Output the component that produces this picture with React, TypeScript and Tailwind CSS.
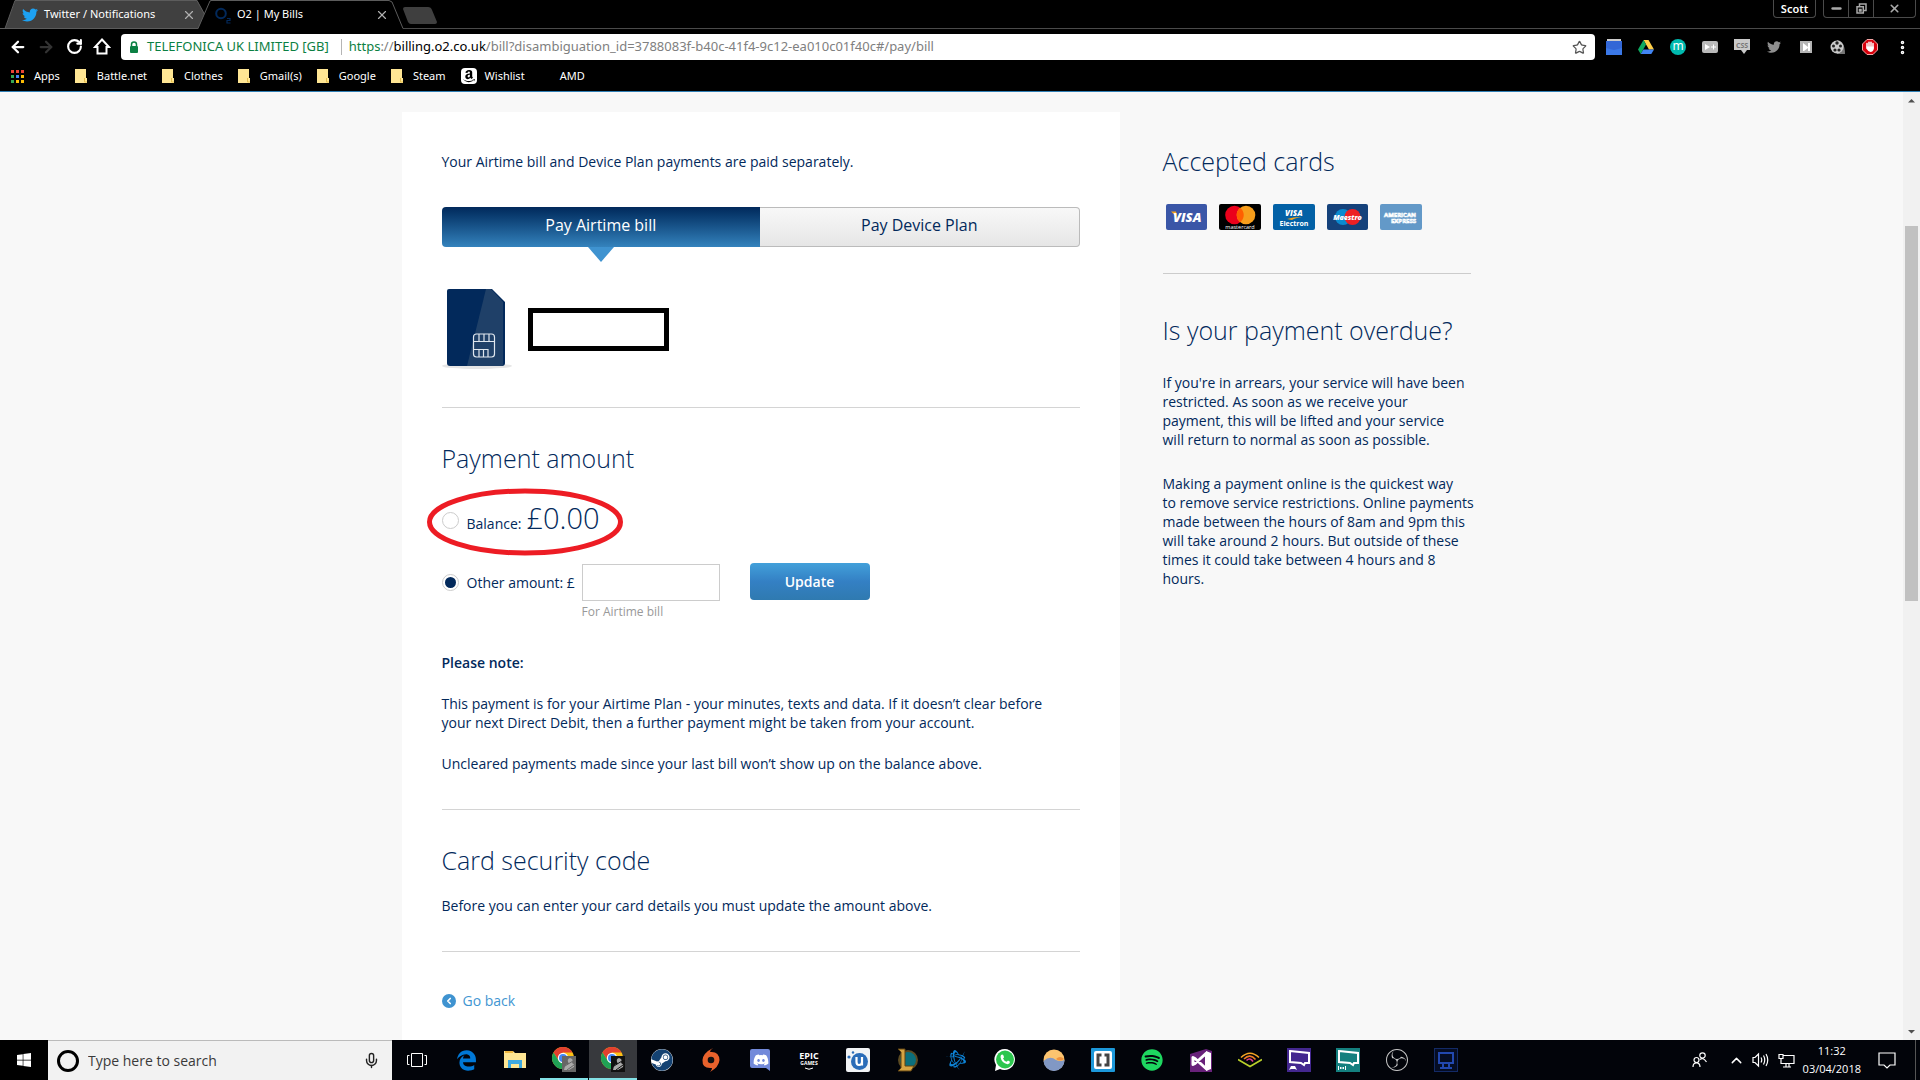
import React, { useState } from 'react';
import { ArrowLeft, ArrowRight, ChevronLeft, ChevronUp, Mic, Minus, MoreVertical, RotateCw, Star, X } from 'lucide-react';
import { FaAmazon, FaBattleNet, FaDiscord, FaEdgeLegacy, FaSpotify, FaSteam, FaTwitter, FaWindows } from 'react-icons/fa6';
import { SiObsstudio } from 'react-icons/si';

const bookmarks = ['Battle.net', 'Clothes', 'Gmail(s)', 'Google', 'Steam'];

const appDots = ['#ea4335', '#ea4335', '#ea4335', '#34a853', '#4285f4', '#fbbc05', '#34a853', '#fbbc05', '#fbbc05'];

function TabStrip() {
  return (
    <div className="flex h-[29px] text-white text-[11px]">
      <div className="relative w-[198px] h-[29px]">
        <svg className="absolute inset-0 overflow-visible" width="198" height="29">
          <path d="M5 28.5L15 1L16 0H197L205 15L198 28.5Z" fill="#404040" />
          <path d="M0 28.5H5L15 .5H197L205 15L198 28.5H5" fill="none" stroke="#5c5c5c" />
        </svg>
        <div className="relative flex items-center h-[29px] pl-[22px] pr-[2px]">
          <FaTwitter className="w-4 h-4 text-[#1da1f2]" />
          <span className="ml-[6px] flex-1 whitespace-nowrap">Twitter / Notifications</span>
          <button aria-label="Close tab" className="text-[#b0b0b0]">
            <X size={14} />
          </button>
        </div>
      </div>
      <div className="relative w-[205px] h-[29px]">
        <svg className="absolute inset-0 overflow-visible" width="205" height="29">
          <path d="M0 28.5L12 1L13 .5H191L194 2L205 28.5" fill="#000" stroke="#5c5c5c" />
          <path d="M1 28.5H204" stroke="#000" />
        </svg>
        <div className="relative flex items-center h-[29px] pl-4 pr-[14px]">
          <svg width="18" height="18" viewBox="0 0 18 18" fill="none" stroke="#02295b">
            <circle cx="7" cy="7.5" r="4.8" strokeWidth="2" />
            <path d="M13 12.5h3v2h-3v2.5h3.5" strokeWidth="1.2" />
          </svg>
          <span className="ml-[5px] flex-1 whitespace-nowrap">O2 | My Bills</span>
          <button aria-label="Close tab" className="text-[#b0b0b0]">
            <X size={14} />
          </button>
        </div>
      </div>
      <div className="flex-1 border-b border-[#4a4a4a] pt-[7px]">
        <button aria-label="New tab" className="block">
          <svg width="34" height="17">
            <path d="M2 0H25Q28 0 29 3L34 15Q34 17 32 17H8Q6 17 5 15L0 2Q0 0 2 0Z" fill="#3f3f3f" />
          </svg>
        </button>
      </div>
      <div className="flex items-start gap-[7px] pr-1 border-b border-[#4a4a4a]">
        <button className="w-[43px] h-[18px] border border-t-0 border-[#4a4a4a] rounded-b leading-[17px] font-semibold">
          Scott
        </button>
        <div className="flex h-[18px] border border-t-0 border-[#4a4a4a] rounded-b text-[#a9a9a9] divide-x divide-[#4a4a4a]">
          <button aria-label="Minimise" className="w-[25px] flex items-center justify-center">
            <Minus size={13} strokeWidth={5} />
          </button>
          <button aria-label="Restore" className="w-[25px] flex items-center justify-center">
            <svg width="11" height="11" fill="none" stroke="currentColor" strokeWidth="1.5">
              <path d="M3.5 3V1H10V7.5H8" />
              <path d="M1 3.7H7.3V10H1Z" />
              <path d="M3.5 6.5H5V8H3.5Z" />
            </svg>
          </button>
          <button aria-label="Close" className="w-[41px] flex items-center justify-center">
            <X size={13} strokeWidth={3} />
          </button>
        </div>
      </div>
    </div>
  );
}

function Extensions() {
  return (
    <div className="flex items-center pl-[3px] pr-[2px]">
      {[
        <svg key="cal" width="16" height="16">
          <path d="M0 2H16V16H0Z" fill="#3b78e7" />
          <path d="M0 2H16V9L8 11L0 9Z" fill="#3367d6" />
          <path d="M1 1H15" stroke="#ccc" strokeWidth="2" />
        </svg>,
        <svg key="drive" width="16" height="16" viewBox="0 0 16 16">
          <path d="M5.5 1H10.5L16 10.5H11Z" fill="#ffcf48" />
          <path d="M5.5 1L8 5.5L2.7 15L0 10.5Z" fill="#0da960" />
          <path d="M5.3 10.5H16L13.3 15H2.7Z" fill="#4285f4" />
        </svg>,
        <span key="m" className="w-4 h-4 rounded-full bg-[#00b9ae] text-white text-[12px] leading-[14px] text-center">m</span>,
        <svg key="play" width="16" height="12">
          <rect width="16" height="12" rx="2" fill="#b9b9b9" />
          <path d="M3 3L8 6L3 9Z" fill="#fff" />
          <path d="M9 6H14M11.5 3.5V8.5" stroke="#fff" />
        </svg>,
        <svg key="css" width="16" height="16">
          <path d="M0 0H16V11H13L10 15L7 11H0Z" fill="#c9c9c9" />
          <text x="8" y="8.5" fontSize="7" fontWeight="700" fill="#777" textAnchor="middle">CSS</text>
        </svg>,
        <FaTwitter key="tw" className="w-[14px] h-[14px] text-[#8f8f8f]" />,
        <svg key="k" width="12" height="12">
          <rect width="12" height="12" fill="#b5b5b5" />
          <path d="M3 2L8 6V2H10V10H8V7L4 10H3Z" fill="#fff" />
        </svg>,
        <svg key="reel" width="16" height="16">
          <path d="M7 1Q15 2 15 15L7 15Z" fill="#777" />
          <circle cx="7" cy="8" r="6.5" fill="#ccc" />
          <g fill="#222">
            <circle cx="7" cy="4" r="1.7" />
            <circle cx="3.5" cy="7" r="1.5" />
            <circle cx="10.5" cy="7" r="1.5" />
            <circle cx="5" cy="11" r="1.6" />
            <circle cx="9" cy="11" r="1.6" />
          </g>
        </svg>,
        <svg key="adb" width="16" height="16">
          <path d="M5 .5H11L15.5 5V11L11 15.5H5L.5 11V5Z" fill="#d8000c" stroke="#f3a3a3" />
          <path d="M5 8V4.5M7 8V3.2M9 8V3.2M11 9V4.5" stroke="#fff" strokeWidth="1.5" strokeLinecap="round" />
          <path d="M4.3 7.5H11.8V10Q11 13 8.5 13Q6.5 13 4.3 9.5Z" fill="#fff" />
        </svg>,
      ].map((icon, i) => (
        <button key={i} aria-label={`Extension ${i + 1}`} className="w-8 h-[26px] flex items-center justify-center">
          {icon}
        </button>
      ))}
      <button aria-label="Menu" className="w-8 flex justify-center text-white">
        <MoreVertical size={17} strokeWidth={3} />
      </button>
    </div>
  );
}

function Toolbar() {
  return (
    <div className="flex items-center h-9 text-white">
      <div className="flex pl-1">
        <button aria-label="Back" className="w-7 flex justify-center">
          <ArrowLeft size={18} strokeWidth={3} />
        </button>
        <button aria-label="Forward" className="w-7 flex justify-center text-[#333]">
          <ArrowRight size={18} strokeWidth={3} />
        </button>
        <button aria-label="Reload" className="w-7 flex justify-center">
          <RotateCw size={17} strokeWidth={3} />
        </button>
        <button aria-label="Home" className="w-7 flex justify-center">
          <svg width="18" height="17" fill="none" stroke="currentColor" strokeWidth="2">
            <path d="M9 1.5L16 9H13.5V15.5H4.5V9H2Z" />
          </svg>
        </button>
      </div>
      <div className="flex-1 flex items-center h-[26px] ml-[5px] px-2 bg-white rounded-sm text-[13px] text-[#0b8043] whitespace-nowrap">
        <svg width="10" height="12">
          <path d="M2.5 5V3.5Q2.5 1 5 1Q7.5 1 7.5 3.5V5" fill="none" stroke="#0b8043" strokeWidth="1.5" />
          <rect x="1" y="5" width="8" height="7" rx="1" fill="#0b8043" />
        </svg>
        <span className="ml-2">TELEFONICA UK LIMITED [GB]</span>
        <span className="w-px h-4 ml-3 mr-[7px] bg-[#b5b5b5]" />
        <span className="flex-1 text-[#808080]">
          <span className="text-[#0b8043]">https</span>://<span className="text-black">billing.o2.co.uk</span>
          /bill?disambiguation_id=3788083f-b40c-41f4-9c12-ea010c01f40c#/pay/bill
        </span>
        <button aria-label="Bookmark this page" className="text-[#555]">
          <Star size={15} />
        </button>
      </div>
      <Extensions />
    </div>
  );
}

function BookmarksBar() {
  return (
    <nav className="flex items-center h-[26px] pl-[11px] pb-1 gap-[15px] text-[11px] text-white whitespace-nowrap">
      <a href="#apps" className="flex items-center gap-[10px]">
        <span className="grid grid-cols-3 gap-[2px]">
          {appDots.map((color, i) => (
            <span key={i} className="w-[3px] h-[3px]" style={{ backgroundColor: color }} />
          ))}
        </span>
        Apps
      </a>
      {bookmarks.map((name) => (
        <a key={name} href="#folder" className="flex items-center gap-[10px]">
          <svg width="12" height="14">
            <path d="M0 0H11V9H12V14H0Z" fill="#ffe694" />
            <path d="M9.5 9V13H12" fill="none" stroke="#e5bd4b" />
          </svg>
          {name}
        </a>
      ))}
      <a href="#wishlist" className="flex items-center gap-2">
        <span className="w-4 h-4 rounded-sm bg-white flex items-center justify-center">
          <FaAmazon className="w-[14px] h-[14px] text-black" />
        </span>
        Wishlist
      </a>
      <a href="#amd" className="pl-5">AMD</a>
    </nav>
  );
}

function SimCard() {
  return (
    <svg width="70" height="82" viewBox="0 0 70 82">
      <ellipse cx="35" cy="78" rx="35" ry="3" fill="#e6e6e6" />
      <path d="M7 1H50L63 14V75Q63 78 60 78H8Q5 78 5 75V3Q5 1 7 1Z" fill="#02295b" />
      <path d="M44 1H49L61 14V78H25Z" fill="#1f4068" />
      <g fill="none" stroke="#dfe6ee" strokeWidth="1.2">
        <rect x="31.5" y="46" width="21" height="23" rx="3" />
        <path d="M32 53.5H52M32 61.5H46V69M37 46V53M42 46V53M47 46V53M37 62V69M41.5 62V69" />
      </g>
    </svg>
  );
}

function PaymentCards() {
  return (
    <div className="flex gap-3 pl-[3px] mt-[27px]">
      <svg width="41" height="26" viewBox="0 0 41 26">
        <rect width="41" height="26" rx="2" fill="#3a56a7" />
        <path d="M5 7.5H10L11.5 14Z" fill="#f4a51c" />
        <text x="7" y="17.5" fontSize="13" fontWeight="800" fontStyle="italic" fill="#fff">VISA</text>
      </svg>
      <svg width="42" height="26" viewBox="0 0 42 26">
        <rect width="42" height="26" rx="2" fill="#000" />
        <circle cx="15.5" cy="11" r="9.3" fill="#eb001b" />
        <circle cx="27" cy="11" r="9.3" fill="#f79e1b" />
        <path d="M21.2 3.7A9.3 9.3 0 0 1 21.2 18.3A9.3 9.3 0 0 1 21.2 3.7Z" fill="#ff5f00" />
        <text x="21" y="24.5" fontSize="5.5" textAnchor="middle" fill="#fff">mastercard</text>
      </svg>
      <svg width="42" height="26" viewBox="0 0 42 26">
        <rect width="42" height="26" rx="2" fill="#0361a6" />
        <text x="12" y="11.5" fontSize="8" fontWeight="800" fontStyle="italic" fill="#fff">VISA</text>
        <path d="M14 15Q22 12.5 29 13Q22 14 19 16Z" fill="#f4a51c" />
        <text x="21" y="22" fontSize="7" fontWeight="700" textAnchor="middle" fill="#fff">Electron</text>
      </svg>
      <svg width="41" height="26" viewBox="0 0 41 26">
        <rect width="41" height="26" rx="2" fill="#15427b" />
        <circle cx="16" cy="13" r="8" fill="#0a8bd0" />
        <circle cx="25.5" cy="13" r="8" fill="#ed2024" />
        <text x="20.5" y="15.5" fontSize="7" fontWeight="800" fontStyle="italic" textAnchor="middle" fill="#fff">Maestro</text>
      </svg>
      <svg width="42" height="26" viewBox="0 0 42 26">
        <rect width="42" height="26" rx="2" fill="#6399c8" />
        <g fontSize="6" fontWeight="700" fill="#6399c8" stroke="#fff" strokeWidth=".7">
          <text x="4" y="12.5">AMERICAN</text>
          <text x="11" y="18.8">EXPRESS</text>
        </g>
      </svg>
    </div>
  );
}

function PaymentForm() {
  const [choice, setChoice] = useState('other');
  const radio =
    'appearance-none w-[17px] h-[17px] rounded-full border border-[#ccc] bg-white bg-clip-content p-[2px] checked:bg-[#02295b]';

  return (
    <form onSubmit={(e) => e.preventDefault()}>
      <div className="relative flex items-baseline h-[63px] mt-[14px] pt-3">
        <input
          id="balance"
          type="radio"
          name="amount"
          className={`${radio} -mb-1.5`}
          checked={choice === 'balance'}
          onChange={() => setChoice('balance')}
        />
        <label htmlFor="balance" className="ml-2 flex items-baseline gap-[5px]">
          Balance: <span className="text-[29px] leading-[36px] font-light">£0.00</span>
        </label>
        <svg className="absolute -left-[15px] top-0 pointer-events-none" width="197" height="68">
          <ellipse cx="98" cy="34" rx="95.5" ry="31" fill="none" stroke="#ed1c24" strokeWidth="5" />
        </svg>
      </div>
      <div className="flex items-start mt-3">
        <div className="flex items-center h-[38px] w-[140px]">
          <input
            id="other"
            type="radio"
            name="amount"
            className={radio}
            checked={choice === 'other'}
            onChange={() => setChoice('other')}
          />
          <label htmlFor="other" className="ml-2 whitespace-nowrap">Other amount: £</label>
        </div>
        <div>
          <input aria-label="Other amount" type="text" className="block w-[138px] h-[37px] mt-[1px] px-2 border border-[#ccc] bg-white" />
          <p className="pt-px text-[12px] leading-5 text-[#999]">For Airtime bill</p>
        </div>
        <button className="ml-[30px] w-[120px] h-[37px] rounded bg-linear-to-b from-[#42a0da] via-[#3480c4] to-[#2f7ab0] text-white font-semibold">
          Update
        </button>
      </div>
    </form>
  );
}

function MainPanel() {
  return (
    <main className="w-[718px] px-10 pt-10 bg-white">
      <p>Your Airtime bill and Device Plan payments are paid separately.</p>
      <div className="flex mt-[36px] h-10 text-[16px]">
        <button className="relative flex-1 pb-1 rounded-l bg-linear-to-b from-[#02295b] to-[#3483bd] text-white font-medium">
          Pay Airtime bill
          <svg className="absolute left-1/2 top-full -translate-x-1/2" width="26" height="15">
            <path d="M0 0H26L13 15Z" fill="#3f93d0" />
          </svg>
        </button>
        <button className="flex-1 pb-1 rounded-r border border-l-0 border-[#bbb] bg-linear-to-b from-[#f8f8f8] to-[#e6e6e6]">
          Pay Device Plan
        </button>
      </div>
      <div className="flex items-center gap-4 mt-[41px] pb-[37px] border-b border-[#d4d4d4]">
        <SimCard />
        <div className="w-[141px] h-[43px] border-[5px] border-black" />
      </div>
      <h2 className="mt-[34px] text-[25px] leading-8 font-light">Payment amount</h2>
      <PaymentForm />
      <div className="pb-[36px] border-b border-[#d4d4d4]">
        <p className="mt-[31px] font-semibold">Please note:</p>
        <p className="mt-[22px] pr-5">
          This payment is for your Airtime Plan - your minutes, texts and data. If it doesn’t clear before your next
          Direct Debit, then a further payment might be taken from your account.
        </p>
        <p className="mt-[22px]">Uncleared payments made since your last bill won’t show up on the balance above.</p>
      </div>
      <div className="pb-[36px] border-b border-[#d4d4d4]">
        <h2 className="mt-[34px] text-[25px] leading-8 font-light">Card security code</h2>
        <p className="mt-[20px]">Before you can enter your card details you must update the amount above.</p>
      </div>
      <a href="#back" className="flex items-center gap-[7px] mt-[39px] text-[#3f96d2]">
        <span className="w-[14px] h-[14px] rounded-full bg-[#3f93d0] flex items-center justify-center">
          <ChevronLeft size={10} strokeWidth={4} className="text-white" />
        </span>
        Go back
      </a>
    </main>
  );
}

function Sidebar() {
  return (
    <aside className="w-[308px] pt-[33px]">
      <div className="pb-[43px] border-b border-[#ccc]">
        <h2 className="text-[25px] leading-8 font-light">Accepted cards</h2>
        <PaymentCards />
      </div>
      <h2 className="mt-[40px] text-[25px] leading-8 font-light">Is your payment overdue?</h2>
      <p className="mt-[27px] pr-1">
        If you're in arrears, your service will have been restricted. As soon as we receive your payment, this will be
        lifted and your service will return to normal as soon as possible.
      </p>
      <p className="mt-[25px] whitespace-nowrap">
        Making a payment online is the quickest way
        <br />
        to remove service restrictions. Online payments
        <br />
        made between the hours of 8am and 9pm this
        <br />
        will take around 2 hours. But outside of these
        <br />
        times it could take between 4 hours and 8
        <br />
        hours.
      </p>
    </aside>
  );
}

function Scrollbar() {
  return (
    <div className="w-[17px] bg-[#f1f1f1] flex flex-col items-center justify-between">
      <div className="flex flex-col items-center w-full">
        <svg width="17" height="17">
          <path d="M5 10.5H12L8.5 7Z" fill="#505050" />
        </svg>
        <div className="mt-[117px] w-[13px] h-[375px] bg-[#c1c1c1]" />
      </div>
      <svg width="17" height="17">
        <path d="M5 7H12L8.5 10.5Z" fill="#505050" />
      </svg>
    </div>
  );
}

function ChromeIcon({ shade }: { shade: string }) {
  return (
    <svg width="26" height="26" viewBox="0 0 26 26">
      <circle cx="12" cy="12" r="11" fill="#fbc116" />
      <path d="M2.47 6.5A11 11 0 0 1 21.53 6.5H12L7.67 14.5Z" fill="#e2402f" />
      <path d="M2.47 6.5A11 11 0 0 0 12 23L16.33 14.5H7.67Z" fill="#1fa255" />
      <circle cx="12" cy="12" r="5.2" fill="#fff" />
      <circle cx="12" cy="12" r="4" fill="#4285f4" />
      <rect x="11" y="10" width="14" height="16" fill={shade} />
      <path d="M13 24Q14 17 18 18Q15 13 19 12Q23 13 21 17Q24 18 23 21L18 24Z" fill="#aaa" />
      <path d="M14 20L22 15M16 24L23 19" stroke={shade} />
    </svg>
  );
}

const taskbarApps = [
  {
    name: 'Task View',
    icon: (
      <svg width="20" height="16" fill="none" stroke="#fff">
        <path d="M4.5 1.5H15.5V14.5H4.5ZM2.5 3.5H.5V12.5H2.5M17.5 3.5H19.5V12.5H17.5" />
      </svg>
    ),
  },
  { name: 'Edge', icon: <FaEdgeLegacy className="w-[21px] h-[21px] text-[#0078d7]" /> },
  {
    name: 'File Explorer',
    icon: (
      <svg width="22" height="20">
        <path d="M0 1H9L11 3H22V18H0Z" fill="#ffe694" />
        <path d="M1 2H9" stroke="#f0b73f" strokeWidth="2" />
        <path d="M4 18V10H18V18H15V14H7V18Z" fill="#3fa9e0" />
      </svg>
    ),
  },
  { name: 'Chrome', icon: <ChromeIcon shade="#666" />, running: true },
  { name: 'Chrome profile', icon: <ChromeIcon shade="#111" />, running: true, active: true },
  {
    name: 'Steam',
    icon: (
      <span className="w-[22px] h-[22px] rounded-full bg-white">
        <FaSteam className="w-[22px] h-[22px] text-[#144272]" />
      </span>
    ),
  },
  {
    name: 'Origin',
    icon: (
      <svg width="20" height="26" viewBox="0 0 20 26">
        <path d="M12 1Q9 3 9 5Q18 4 18.5 13Q18 20 9 25Q11 23 11 21Q1 22 1.5 13Q2 6 12 1Z" fill="#e8622c" />
        <circle cx="10" cy="13" r="3.3" fill="#111" />
      </svg>
    ),
  },
  {
    name: 'Discord',
    icon: (
      <svg width="20" height="22">
        <path d="M2 0H18Q20 0 20 2V22L16 19H2Q0 19 0 17V2Q0 0 2 0Z" fill="#7289da" />
        <FaDiscord x="3" y="3" width="14" height="13" color="#fff" />
      </svg>
    ),
  },
  {
    name: 'Epic Games',
    icon: (
      <svg width="20" height="24">
        <text x="10" y="11" fontSize="9" fontWeight="700" fill="#fff" textAnchor="middle">EPIC</text>
        <text x="10" y="17" fontSize="5" fontWeight="700" fill="#fff" textAnchor="middle">GAMES</text>
        <path d="M6 20Q10 22.5 14 20" stroke="#fff" fill="none" />
      </svg>
    ),
  },
  {
    name: 'Uplay',
    icon: (
      <svg width="24" height="24">
        <rect width="24" height="24" rx="2" fill="#f1f3f5" />
        <circle cx="13.5" cy="13.5" r="8.5" fill="#2a6cb8" />
        <circle cx="3" cy="9" r="1.6" fill="#2a6cb8" />
        <circle cx="7" cy="4.5" r="1.2" fill="#2a6cb8" />
        <path d="M10.5 9V14Q10.5 17 13 17Q16 17 16 14V9V17.5" fill="none" stroke="#fff" strokeWidth="2.2" />
      </svg>
    ),
  },
  {
    name: 'League of Legends',
    icon: (
      <svg width="22" height="24">
        <circle cx="12" cy="12" r="9" fill="#0b6f7c" stroke="#5b4a22" strokeWidth="2" />
        <path d="M2 1H9V18H18L15 23H2L5 20V4Z" fill="#d6a443" stroke="#5e4312" />
      </svg>
    ),
  },
  { name: 'Battle.net', icon: <FaBattleNet className="w-5 h-5 text-[#0d84d8]" /> },
  {
    name: 'WhatsApp',
    icon: (
      <svg width="22" height="24" viewBox="0 0 22 24">
        <path d="M11 1A10.5 10.5 0 1 1 6 21L1 23L2 17A10.5 10.5 0 0 1 11 1Z" fill="#fff" />
        <circle cx="11" cy="11.5" r="9" fill="#2cc64e" />
        <path d="M7 7Q9 5.5 9.7 8L10 9.5L9 10.5Q10 13 12.7 13.7L14 12.5L16 13.7Q16 16 13.5 16.2Q7.5 15 6.5 9Z" fill="#fff" />
      </svg>
    ),
  },
  {
    name: 'f.lux',
    icon: (
      <svg width="22" height="22">
        <circle cx="11" cy="11" r="10.5" fill="#fcc46f" />
        <path d="M.5 12Q7 6 13 11Q17 13 21.5 11A10.5 10.5 0 0 1 .5 12Z" fill="#8198c4" />
        <path d="M13 10Q17 6 21 10Q17 13 13 10Z" fill="#f0923c" />
      </svg>
    ),
  },
  {
    name: 'Brackets',
    icon: (
      <svg width="24" height="24">
        <rect width="24" height="24" rx="1" fill="#1c98da" />
        <rect x="3" y="3" width="18" height="18" rx="2" fill="#fff" />
        <path d="M10.5 7H7V17H10.5M13.5 7H17V17H13.5" fill="none" stroke="#444" strokeWidth="3" />
      </svg>
    ),
  },
  { name: 'Spotify', icon: <FaSpotify className="w-[22px] h-[22px] text-[#1ed760]" /> },
  {
    name: 'Visual Studio',
    icon: (
      <svg width="22" height="23">
        <path d="M0 5L16 0L22 2V23H0Z" fill="#68217a" />
        <path d="M3 8.5V15.5L5 14.5L16.5 4V20L5 9.5Z" fill="none" stroke="#fff" strokeWidth="3" strokeLinejoin="round" />
        <path d="M16 2L21 4V20L16 22Z" fill="#fff" />
      </svg>
    ),
  },
  {
    name: 'Audible',
    icon: (
      <svg width="24" height="16" fill="none" strokeWidth="1.6">
        <path d="M0 7.5L12 14.5L24 7.5" stroke="#b9cf2a" />
        <path d="M3 5.5Q12 -3 21 5.5" stroke="#f5a623" />
        <path d="M6 7Q12 1 17.5 7.5" stroke="#f07a24" />
        <path d="M8.5 8.5Q12 5 15 9.5" stroke="#d93a8a" />
      </svg>
    ),
  },
  {
    name: 'Game capture',
    icon: (
      <svg width="24" height="24">
        <rect width="24" height="24" fill="#43278f" />
        <path d="M3 3L22 5V15H18L17 17L14 15L3 14Z" fill="none" stroke="#fff" strokeWidth="2" />
        <path d="M2 22L4 18H8L10 22L8 21H4Z" fill="#fff" />
      </svg>
    ),
  },
  {
    name: 'Live capture',
    icon: (
      <svg width="24" height="24">
        <rect width="24" height="24" fill="#14807f" />
        <path d="M3 3L22 5V15H18L17 17L14 15L3 14Z" fill="none" stroke="#fff" strokeWidth="2" />
        <path d="M2.5 18V22M9.5 18V22M4.5 19V21M7.5 19V21M6 19V21" stroke="#fff" />
      </svg>
    ),
  },
  { name: 'OBS', icon: <SiObsstudio className="w-[22px] h-[22px] text-[#c8c8c8]" /> },
  {
    name: 'Remote desktop',
    icon: (
      <svg width="24" height="24">
        <rect x=".5" y=".5" width="23" height="23" fill="#050d24" stroke="#132a66" />
        <path d="M5 5H19V15H5ZM9 15V19M15 15V19M6 20H18" fill="none" stroke="#2248b0" strokeWidth="2" />
      </svg>
    ),
  },
];

function Taskbar() {
  return (
    <footer className="flex h-10 bg-[#02040a] text-white">
      <button aria-label="Start" className="w-12 flex items-center justify-center bg-black">
        <FaWindows className="w-4 h-4" />
      </button>
      <label className="flex items-center w-[344px] pl-[9px] pr-3 bg-[#f2f2f2] border-t border-[#bbb]">
        <span className="w-[22px] h-[22px] rounded-full border-[3px] border-black" />
        <input
          type="text"
          aria-label="Search"
          placeholder="Type here to search"
          className="flex-1 ml-[9px] text-[14px] text-black placeholder:text-[#3a3a3a] outline-none"
        />
        <Mic size={17} strokeWidth={2} className="text-[#222]" />
      </label>
      <div className="flex flex-1 gap-px pl-px">
        {taskbarApps.map(({ name, icon, running, active }) => (
          <button
            key={name}
            aria-label={name}
            className={`w-12 h-10 flex items-center justify-center ${active ? 'bg-[#37393d]' : ''} ${
              running ? 'border-b-2 border-[#83e1e6]' : ''
            }`}
          >
            {icon}
          </button>
        ))}
      </div>
      <div className="flex items-center pr-[4px]">
        <svg width="16" height="16" fill="none" stroke="#fff" strokeWidth="1.2">
          <circle cx="10.5" cy="3.5" r="2.7" />
          <circle cx="4.5" cy="8" r="2.5" />
          <path d="M1 15Q1 10.8 4.5 10.8Q8 10.8 8 15M8 7.5Q11 4.8 14.5 10" />
        </svg>
        <ChevronUp size={17} className="ml-[20px]" />
        <svg width="18" height="16" className="ml-[7px]" fill="none" stroke="#fff" strokeWidth="1.2">
          <path d="M1 5.5H3L6.5 2V14L3 10.5H1ZM9 5.5Q10.5 8 9 10.5M11.5 3.5Q14 8 11.5 12.5M14 2Q17.5 8 14 14" />
        </svg>
        <svg width="17" height="15" className="ml-2" fill="none" stroke="#fff" strokeWidth="1.2">
          <path d="M5 2.5H16V10.5H3V6M8 10.5V14M11 10.5V14M5 14H13M1 1.5H5V5.5H1Z" />
        </svg>
        <div className="ml-2 text-[11px] leading-[18px] text-center">
          <div>11:32</div>
          <div>03/04/2018</div>
        </div>
        <svg width="18" height="17" className="ml-[17px] mr-[19px]" fill="none" stroke="#fff" strokeWidth="1.2">
          <path d="M1 1H17V13H12L9 16L6 13H1Z" />
        </svg>
        <span className="w-px h-10 bg-[#555]" />
      </div>
    </footer>
  );
}

export default function App() {
  return (
    <div className="h-screen flex flex-col overflow-hidden bg-black font-['Open_Sans','Noto_Sans',sans-serif]">
      <header className="font-['Noto_Sans','Open_Sans',sans-serif]">
        <TabStrip />
        <Toolbar />
        <BookmarksBar />
      </header>
      <div className="flex flex-1 min-h-0 border-t border-[#2f7fb5]">
        <div className="flex-1 overflow-hidden bg-[#f8f8f8] text-[14px] leading-[19px] text-[#02295b]">
          <div className="flex items-stretch w-[1100px] min-h-full mx-auto pt-[20px] gap-[43px]">
            <MainPanel />
            <Sidebar />
          </div>
        </div>
        <Scrollbar />
      </div>
      <Taskbar />
    </div>
  );
}
